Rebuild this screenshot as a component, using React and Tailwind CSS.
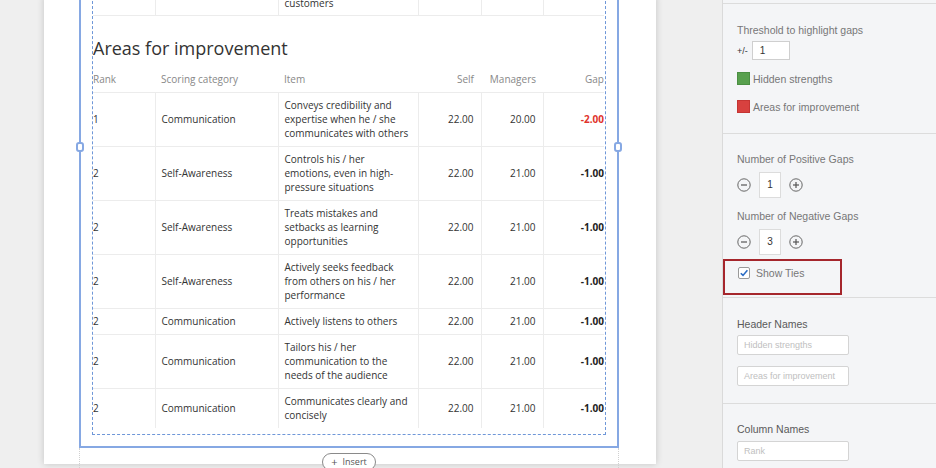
import React from "react";

const rows = [
  { rank: "1", cat: "Communication", item: ["Conveys credibility and", "expertise when he / she", "communicates with others"], self: "22.00", mgr: "20.00", gap: "-2.00", red: true },
  { rank: "2", cat: "Self-Awareness", item: ["Controls his / her", "emotions, even in high-", "pressure situations"], self: "22.00", mgr: "21.00", gap: "-1.00" },
  { rank: "2", cat: "Self-Awareness", item: ["Treats mistakes and", "setbacks as learning", "opportunities"], self: "22.00", mgr: "21.00", gap: "-1.00" },
  { rank: "2", cat: "Self-Awareness", item: ["Actively seeks feedback", "from others on his / her", "performance"], self: "22.00", mgr: "21.00", gap: "-1.00" },
  { rank: "2", cat: "Communication", item: ["Actively listens to others"], self: "22.00", mgr: "21.00", gap: "-1.00" },
  { rank: "2", cat: "Communication", item: ["Tailors his / her", "communication to the", "needs of the audience"], self: "22.00", mgr: "21.00", gap: "-1.00" },
  { rank: "2", cat: "Communication", item: ["Communicates clearly and", "concisely"], self: "22.00", mgr: "21.00", gap: "-1.00" },
];

function Cols() {
  return (
    <colgroup>
      <col className="w-[62px]" />
      <col className="w-[123px]" />
      <col className="w-[140px]" />
      <col className="w-[63px]" />
      <col className="w-[62px]" />
      <col className="w-[61px]" />
    </colgroup>
  );
}

function Stepper({ value }) {
  return (
    <div className="flex items-center h-[26px]">
      <svg width="14" height="14" viewBox="0 0 14 14" className="block">
        <circle cx="7" cy="7" r="6.2" fill="none" stroke="#666" strokeWidth="1" />
        <line x1="4" y1="7" x2="10" y2="7" stroke="#555" strokeWidth="1.2" />
      </svg>
      <div className="ml-[8px] w-[22px] h-[26px] bg-white border border-[#dcdcdc] flex items-center justify-center text-[10px] text-[#333]">
        {value}
      </div>
      <svg width="14" height="14" viewBox="0 0 14 14" className="block ml-[8px]">
        <circle cx="7" cy="7" r="6.2" fill="none" stroke="#666" strokeWidth="1" />
        <line x1="4" y1="7" x2="10" y2="7" stroke="#555" strokeWidth="1.2" />
        <line x1="7" y1="4" x2="7" y2="10" stroke="#555" strokeWidth="1.2" />
      </svg>
    </div>
  );
}

export default function App() {
  const sans = { fontFamily: '"Open Sans", sans-serif' };
  return (
    <div className="w-[936px] h-[468px] flex overflow-hidden bg-[#efefef]">
      {/* canvas */}
      <div className="w-[722px] h-full shrink-0">
        <div className="ml-[44px] w-[612px] h-full bg-white shadow-[0_0_7px_rgba(0,0,0,0.18)] pl-[35px]" style={sans}>
          {/* selected block */}
          <div className="relative w-[540px] border-x-2 border-b-2 border-[#86a8e3] px-[11px] pb-[11px]">
            <div className="absolute left-[-5px] top-[146px] w-[8px] h-[10px] rounded-[3px] border-2 border-[#86a8e3] bg-white" />
            <div className="absolute right-[-5px] top-[146px] w-[8px] h-[10px] rounded-[3px] border-2 border-[#86a8e3] bg-white" />
            <div className="border-x border-b border-dashed border-[#6f97d8] pb-[6px]">
              <div className="-mt-[4px]">
                <table className="w-[511px] table-fixed border-collapse text-[10px] leading-[14px] text-[#333]">
                  <Cols />
                  <tbody>
                    <tr className="border-b border-[#ececec]">
                      <td className="pb-[5px]"></td>
                      <td className="border-l border-[#ececec] pb-[5px]"></td>
                      <td className="border-l border-[#ececec] px-[6px] pb-[5px]">customers</td>
                      <td className="border-l border-[#ececec] pb-[5px]"></td>
                      <td className="border-l border-[#ececec] pb-[5px]"></td>
                      <td className="border-l border-[#ececec] pb-[5px]"></td>
                    </tr>
                  </tbody>
                </table>
              </div>
              <div className="mt-[18px] h-[28px] leading-[28px] text-[18px] text-[#333]">Areas for improvement</div>
              <table className="mt-[5px] w-[511px] table-fixed border-collapse text-[10px] leading-[14px]">
                <Cols />
                <thead>
                  <tr className="h-[25px] text-[#888] border-b border-[#ececec]">
                    <th className="text-left font-normal pl-0">Rank</th>
                    <th className="text-left font-normal px-[6px]">Scoring category</th>
                    <th className="text-left font-normal px-[6px]">Item</th>
                    <th className="text-right font-normal px-[7px]">Self</th>
                    <th className="text-right font-normal px-[7px]">Managers</th>
                    <th className="text-right font-normal pr-0">Gap</th>
                  </tr>
                </thead>
                <tbody className="text-[#333]">
                  {rows.map((r, i) => (
                    <tr key={i} className={i < rows.length - 1 ? "border-b border-[#ececec]" : ""}>
                      <td className="py-[5.5px] pl-0">{r.rank}</td>
                      <td className="py-[5.5px] px-[6px] border-l border-[#ececec]">{r.cat}</td>
                      <td className="py-[5.5px] px-[6px] border-l border-[#ececec] whitespace-nowrap">
                        {r.item.map((l, j) => (
                          <div key={j}>{l}</div>
                        ))}
                      </td>
                      <td className="py-[5.5px] px-[7px] text-right border-l border-[#ececec]">{r.self}</td>
                      <td className="py-[5.5px] px-[7px] text-right border-l border-[#ececec]">{r.mgr}</td>
                      <td className={"py-[5.5px] pr-0 text-right border-l border-[#ececec] font-bold " + (r.red ? "text-[#e0332c]" : "text-[#222]")}>
                        {r.gap}
                      </td>
                    </tr>
                  ))}
                </tbody>
              </table>
            </div>
          </div>
          {/* next block */}
          <div className="w-[540px] h-[30px] border-x border-dotted border-[#d0d0d0] flex justify-center pt-[5px]">
            <div className="h-[18px] px-[8px] rounded-full border border-[#8a8a8a] bg-white flex items-center gap-[5px] text-[9px] text-[#555]">
              <span className="text-[11px] leading-none">+</span>
              <span>Insert</span>
            </div>
          </div>
        </div>
      </div>

      {/* right panel */}
      <div className="w-[214px] h-full shrink-0 border-l border-[#dadada] bg-[#f4f5f7] text-[10.5px] leading-[14px] text-[#777]" style={{ fontFamily: '"Liberation Sans", Arial, sans-serif' }}>
        <div className="h-[4px] border-b border-[#dcdcdc]" />
        {/* section 1 */}
        <div className="pl-[14px] pt-[19px] pb-[20px] border-b border-[#dcdcdc]">
          <div>Threshold to highlight gaps</div>
          <div className="mt-[4px] h-[19px] flex items-center">
            <span className="text-[9px] text-[#333]">+/-</span>
            <div className="ml-[4px] w-[38px] h-[19px] bg-white border border-[#cfcfcf] flex items-center pl-[7px] text-[10px] text-[#333]">1</div>
          </div>
          <div className="mt-[12px] h-[13px] flex items-center">
            <div className="w-[13px] h-[13px] bg-[#58a04e] border border-[#4b8f43]" />
            <span className="ml-[3px]">Hidden strengths</span>
          </div>
          <div className="mt-[15px] h-[13px] flex items-center">
            <div className="w-[13px] h-[13px] bg-[#d8413f] border border-[#c53533]" />
            <span className="ml-[3px]">Areas for improvement</span>
          </div>
        </div>
        {/* section 2 */}
        <div className="pl-[14px] pt-[18px] pb-[2px] border-b border-[#dcdcdc]">
          <div>Number of Positive Gaps</div>
          <div className="mt-[6px]">
            <Stepper value="1" />
          </div>
          <div className="mt-[11px]">Number of Negative Gaps</div>
          <div className="mt-[6px]">
            <Stepper value="3" />
          </div>
          <div className="mt-[4px] -ml-[14px] w-[119px] h-[36px] border-2 border-[#a5262c] pl-[13px] pt-[6px] flex items-start">
            <div className="w-[12px] h-[12px] bg-white border border-[#9a9a9a] rounded-[2px] flex items-center justify-center">
              <svg width="10" height="10" viewBox="0 0 10 10">
                <path d="M1.8 5.2 L4 7.4 L8.4 2.2" fill="none" stroke="#2b6cc4" strokeWidth="1.6" />
              </svg>
            </div>
            <span className="ml-[6px] leading-[12px]">Show Ties</span>
          </div>
        </div>
        {/* section 3 */}
        <div className="pl-[14px] pt-[19px] pb-[17px] border-b border-[#dcdcdc]">
          <div className="text-[#5a5a5a]">Header Names</div>
          <div className="mt-[4px] w-[112px] h-[20px] bg-white border border-[#d4d4d4] rounded-[2px] flex items-center pl-[6px] text-[9px] text-[#c0c0c0]">Hidden strengths</div>
          <div className="mt-[11px] w-[112px] h-[20px] bg-white border border-[#d4d4d4] rounded-[2px] flex items-center pl-[6px] text-[9px] text-[#c0c0c0] whitespace-nowrap overflow-hidden">Areas for improvement</div>
        </div>
        {/* section 4 */}
        <div className="pl-[14px] pt-[18px]">
          <div className="text-[#5a5a5a]">Column Names</div>
          <div className="mt-[5px] w-[112px] h-[20px] bg-white border border-[#d4d4d4] rounded-[2px] flex items-center pl-[6px] text-[9px] text-[#c0c0c0]">Rank</div>
        </div>
      </div>
    </div>
  );
}
